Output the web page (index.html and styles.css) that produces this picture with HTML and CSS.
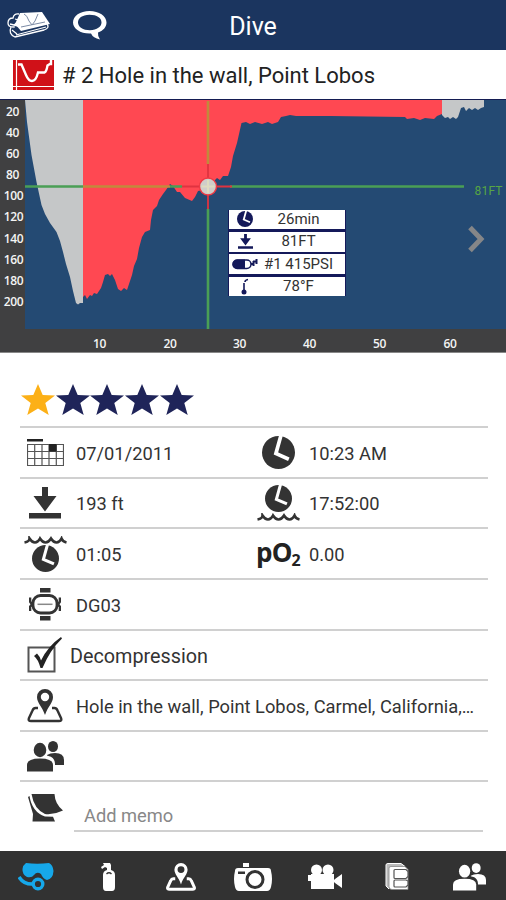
FILE: index.html
```
<!DOCTYPE html>
<html lang="en">
<head>
  <meta charset="UTF-8">
  <meta name="viewport" content="width=device-width, initial-scale=1.0">
  <title>Dive</title>
  <link rel="stylesheet" href="styles.css">
</head>
<body>

  <!-- shared icons -->
  <svg class="defs" width="0" height="0">
    <symbol id="clock" viewBox="0 0 32 32">
      <circle cx="16" cy="16" r="16" fill="currentColor"/>
      <path d="M18.500 -1L13.500 17L26 22.500" fill="none" stroke="#fff" stroke-width="3.600"/>
    </symbol>
    <symbol id="depth" viewBox="0 0 32 32">
      <path d="M13 0h6v9h8.500L16 24.500 4.500 9H13zM0 26h32v5.500H0z" fill="currentColor"/>
    </symbol>
    <symbol id="waves" viewBox="0 0 43 8">
      <path d="M.5 6.500q5-1 5-4q2.500 4 5.500 4t5-4q2.500 4 5.500 4t5.500-4q2.500 4 5.500 4t5-4q1 3 5 4" fill="none" stroke="currentColor" stroke-width="2.600"/>
    </symbol>
    <symbol id="place" viewBox="0 0 36 34">
      <path d="M11 19H8.500Q6.500 19 5.500 21.500L1.800 29.500Q1 32 4 32H32Q35 32 34.200 29.500L30.500 21.500Q29.500 19 27.500 19H25" fill="none" stroke="currentColor" class="ground"/>
      <path fill-rule="evenodd" d="M18 0a8 8 0 0 1 8 8c0 6-5 9-8 18c-3-9-8-12-8-18a8 8 0 0 1 8-8zm0 3.800a4.200 4.200 0 1 0 0 8.400a4.200 4.200 0 1 0 0-8.400z" fill="currentColor"/>
    </symbol>
    <symbol id="people" viewBox="0 0 37 31">
      <ellipse cx="26" cy="5.500" rx="5" ry="5.500" fill="currentColor"/>
      <path d="M20 14q3-2 8-2q9 0 9 7v5H20z" fill="currentColor"/>
      <path d="M0 30V23Q0 15 13 15.500Q26.500 15 26.500 23V30" class="halo" stroke-width="3"/>
      <ellipse cx="13" cy="9" rx="6.500" ry="7.500" class="halo" stroke-width="2"/>
      <path d="M0 30.500V24Q0 17.500 13 17.500Q26 17.500 26 24V30.500z" fill="currentColor"/>
      <ellipse cx="13" cy="9" rx="6.300" ry="7.200" fill="currentColor"/>
    </symbol>
    <symbol id="star" viewBox="0 0 34 31">
      <path d="M17 0L21.700 11L34 11.500L24.300 19L27.700 31L17 24.500L6.300 31L9.700 19L0 11.500L12.300 11z" fill="currentColor"/>
    </symbol>
  </svg>

  <header class="navbar">
    <div class="nav-left">
      <svg width="44" height="28" viewBox="0 0 44 28">
        <path d="M4 16q-3 7 4 10l29-7q6-2 3-6" fill="none" stroke="#fff" stroke-width="1.300"/>
        <path d="M9 24l30-8M5 19l5 4" fill="none" stroke="#fff" stroke-width="1.200"/>
        <path d="M13 2L35 1L43 13L14 20L8 13z" fill="#fff"/>
        <path d="M17 3q3 1 5 7l3 4l3-4l3-7M14 16l24-5" fill="none" stroke="#7d8ca6" stroke-width="1"/>
        <path d="M12 3q-5-1-6 4q-5 0-5 5q0 4 5 4M8 8l7 2M3 13l8 2M11 12q-5 1-4 5" fill="none" stroke="#fff" stroke-width="1.300"/>
      </svg>
      <svg width="34" height="29" viewBox="0 0 34 29">
        <path fill-rule="evenodd" d="M16.500 0C26 0 33.500 5 33.500 11.500C33.500 16 30 20 25 21.500Q24.500 25 27 28.500Q20 27 18 22.500C8 23 0 18 0 11.500C0 5 7 0 16.500 0zM16.500 3.800C9 3.800 5 7.500 5 11.500C5 16 10 19.200 17 19.200C24 19.200 28.500 15.500 28.500 11.500C28.500 7 24 3.800 16.500 3.800z" fill="#fff"/>
      </svg>
    </div>
    <h1>Dive</h1>
  </header>

  <div class="dive-title">
    <svg width="41" height="30" viewBox="0 0 41 30">
      <path d="M0 0h41v30H0z" fill="#d01118"/>
      <path d="M3.500 0v30M0 26.500h41" stroke="#fff" stroke-width="1.200"/>
      <path d="M5 4.500h3.500L13 15q2.500 6 6 6q4 0 6-8.500h6.500q2-1 3-7L37 4h1V0" fill="none" stroke="#fff" stroke-width="2.400"/>
    </svg>
    <h2># 2 Hole in the wall, Point Lobos</h2>
  </div>

  <div class="chart">
    <svg width="506" height="254" viewBox="0 99 506 254">
      <path d="M25 99H506V329H25z" fill="#244a73"/>
      <!-- descent and exit -->
      <path d="M25 100L27 122L31.500 155L36.500 182L41.500 205L45 214L50 223L56.500 232L60 241L63 252L66 264L70 277L73 291L76 303L78 304.500L80 303L83 303V100z" fill="#c5c7c8"/>
      <path d="M442 100V115L445 118L448 117L450 119L453 117L456 119L458 117L461 108L464 107L466 111L469 108L472 110L475 108L478 110L481 108L484 107V100z" fill="#c5c7c8"/>
      <!-- bottom time -->
      <path d="M83 100V297L85 295L87 299L90 295L92 296L94 293L97 294L101 288L103 282L105 275L108 274L110 276L112 274L115 280L118 289L121 291L124 288L127 290L130 281L132 275L134 266L137 259L139 248L142 237L145 232L150 230L151 220L153 210L157 206L159 200L163 194L166 190L170 184L173 186L177 192L180 192L185 198L192 201L195 197L198 191L208 189L213 182L217 178L220 180L223 176L228 176L231 167L233 156L237 143L241.500 123L246 122L250 124L255 122L262 124L268 122L272 124L278 122L281 117L286 116L290 115L296 116L330 116L405 117L407 119L414 118L420 120L425 118L434 119L437 116L442 114V100z" fill="#ff4852"/>
      <path d="M0 99.500H506" stroke="#141c52"/>
      <!-- cursor -->
      <g stroke-width="2.600">
        <path d="M25 186.500H83M170 186.500H182M230 186.500H464M208 209V329" stroke="#4a9f55"/>
        <path d="M83 186.500H170M208 101V164" stroke="#c18a3c"/>
        <path d="M182 186.500H232M208 164V209" stroke="#df3340" stroke-width="1.800"/>
      </g>
      <circle cx="208" cy="186.500" r="8.500" fill="#d0cdc9" stroke="#ee3944" stroke-width="1.400"/>
      <path d="M208 180v13M201.500 186.500h13" stroke="#dedbc0" stroke-width="2"/>
      <g class="axis">
        <text x="12.500" y="115.500">20</text>
        <text x="12.500" y="136.500">40</text>
        <text x="12.500" y="158">60</text>
        <text x="12.500" y="179">80</text>
        <text x="13.500" y="200">100</text>
        <text x="13.500" y="221">120</text>
        <text x="13.500" y="242.500">140</text>
        <text x="13.500" y="263.500">160</text>
        <text x="13.500" y="285">180</text>
        <text x="13.500" y="306">200</text>
        <text x="99.500" y="347.500">10</text>
        <text x="170" y="347.500">20</text>
        <text x="239.500" y="347.500">30</text>
        <text x="309.500" y="347.500">40</text>
        <text x="379.500" y="347.500">50</text>
        <text x="450" y="347.500">60</text>
      </g>
      <text class="depth-mark" x="474.500" y="195">81FT</text>
      <path d="M470 227.500L481 239L470 250.500" fill="none" stroke="#858688" stroke-width="5"/>
    </svg>
    <div class="tooltip">
      <div class="tip"><svg width="16" height="16"><use href="#clock"/></svg><span>26min</span></div>
      <div class="tip"><svg width="15" height="15"><use href="#depth"/></svg><span>81FT</span></div>
      <div class="tip">
        <svg width="26" height="13" viewBox="0 0 26 13">
          <rect x="1" y="2" width="18" height="8.500" rx="4.200" fill="#fff" stroke="#14195a" stroke-width="1.500"/>
          <path d="M5 1.500h8v9.500H5q-4.500-1-4.500-4.700T5 1.500z" fill="#14195a"/>
          <path d="M19 6h3M21.500 3v5M24.500 1v5M21 3.500h4" stroke="#14195a" stroke-width="2"/>
        </svg>
        <span>#1 415PSI</span>
      </div>
      <div class="tip">
        <svg width="10" height="17" viewBox="0 0 10 17">
          <path d="M4 5v9M5 4q0-2 3-2.500" fill="none" stroke="#14195a" stroke-width="1.600"/>
          <circle cx="4" cy="14" r="2.500" fill="#14195a"/>
        </svg>
        <span>78°F</span>
      </div>
    </div>
  </div>

  <main class="details">
    <div class="row rating">
      <svg class="on"><use href="#star"/></svg>
      <svg><use href="#star"/></svg>
      <svg><use href="#star"/></svg>
      <svg><use href="#star"/></svg>
      <svg><use href="#star"/></svg>
    </div>

    <div class="row">
      <div class="icon">
        <svg width="37" height="27" viewBox="0 0 37 27">
          <path d="M.5 5.500h36v21H.5zM.5 12.500h36M.5 19.500h36M7.700 5.500v21M15 5.500v21M22 5.500v21M29.300 5.500v21" fill="none" stroke="#555" stroke-width="1.200"/>
          <path d="M0 0h16v2.500H0zM22 5h7.500v7.500H22z" fill="#222"/>
        </svg>
      </div>
      <span class="value">07/01/2011</span>
      <div class="icon"><svg width="33" height="33"><use href="#clock"/></svg></div>
      <span class="value">10:23 AM</span>
    </div>

    <div class="row">
      <div class="icon"><svg width="32" height="32"><use href="#depth"/></svg></div>
      <span class="value">193 ft</span>
      <div class="icon stack">
        <svg width="27" height="27"><use href="#clock"/></svg>
        <svg width="43" height="8"><use href="#waves"/></svg>
      </div>
      <span class="value">17:52:00</span>
    </div>

    <div class="row">
      <div class="icon stack">
        <svg width="43" height="8"><use href="#waves"/></svg>
        <svg width="27" height="27"><use href="#clock"/></svg>
      </div>
      <span class="value">01:05</span>
      <div class="icon po2">pO<small>2</small></div>
      <span class="value">0.00</span>
    </div>

    <div class="row">
      <div class="icon">
        <svg width="32" height="33" viewBox="0 0 32 33">
          <path d="M11 0h10.500v4.500H11zM11 28h10.500v4.500H11z" fill="currentColor"/>
          <rect x="4" y="7.500" width="24" height="17.500" rx="7.500" fill="none" stroke="currentColor" stroke-width="2.800"/>
          <path d="M1 9.500v4l2 2.800L1 19v4M31 9.500v4l-2 2.800l2 2.700v4" fill="none" stroke="currentColor" stroke-width="2.600"/>
          <path d="M8.500 16.300h15" stroke="#888" stroke-width="1.500"/>
        </svg>
      </div>
      <span class="value">DG03</span>
    </div>

    <div class="row">
      <div class="icon">
        <svg width="36" height="36" viewBox="0 0 36 36">
          <rect x="1.500" y="10.500" width="26" height="24" fill="none" stroke="#555" stroke-width="2"/>
          <path d="M7 19l3-2.500q3 3 4 7Q21 9 34 0l1 1.500Q23 13 15.500 31h-2Q11 22 7 19z" fill="#222"/>
        </svg>
      </div>
      <span class="value deco">Decompression</span>
    </div>

    <div class="row">
      <div class="icon"><svg width="36" height="34"><use href="#place"/></svg></div>
      <span class="value location">Hole in the wall, Point Lobos, Carmel, California,…</span>
    </div>

    <div class="row">
      <div class="icon"><svg width="37" height="31"><use href="#people"/></svg></div>
    </div>

    <div class="row memo">
      <div class="icon">
        <svg width="35" height="28" viewBox="0 0 35 28">
          <path d="M3.500 0H26.500Q27 10 35 16.500Q26 21 17 20Q6 15 3.500 0z" fill="currentColor"/>
          <path d="M0 3l1.500-1Q4 18 17 22.500L25 22.700L27 27.500H4.500L5 20z" fill="currentColor"/>
        </svg>
      </div>
      <input type="text" placeholder="Add memo">
    </div>
  </main>

  <nav class="tabs">
    <a class="active">
      <svg width="36" height="28" viewBox="0 0 36 28">
        <path d="M8 0Q19 1.500 31 0Q35 2 35.500 8Q35 16 29 17Q25 16 23 11Q19 8 16 12Q14 15 9 14Q4 11 4.500 6Q5 2 8 0z" fill="currentColor"/>
        <path d="M1 14Q6 22 16 21" fill="none" stroke="currentColor" stroke-width="3.500"/>
        <circle cx="20" cy="21" r="4.800" fill="none" stroke="currentColor" stroke-width="3.400"/>
      </svg>
    </a>
    <a>
      <svg width="16" height="28" viewBox="0 0 16 28">
        <path d="M3 12q0-4 4-5V5L5 4L2 6L1 4l3-2L3 0h7l1 2v5q4 1 4 5v12q0 4-3 4H6q-3 0-3-4z" fill="#fff"/>
        <path d="M6.500 11q2.500-2.500 5 0" fill="none" stroke="#333" stroke-width="1.400"/>
      </svg>
    </a>
    <a><svg width="30" height="28"><use href="#place"/></svg></a>
    <a>
      <svg width="38" height="28" viewBox="0 0 38 28">
        <path d="M9 0h6v4H9zM4 5h30q3 0 3 3q2 8 0 16q-1 4-4 4H5q-3 0-4-4q-2-8 0-16q0-3 3-3z" fill="#fff"/>
        <circle cx="21" cy="16.500" r="8" fill="none" stroke="#333" stroke-width="3"/>
        <path d="M4 8.500h7v2.500H4z" fill="#333"/>
      </svg>
    </a>
    <a>
      <svg width="34" height="25" viewBox="0 0 34 25">
        <path d="M3 10h23v15H3zM0 11h4v6H0zM27 15l7-5v14l-7-5z" fill="#fff"/>
        <circle cx="8.500" cy="6" r="5.500" fill="#fff"/><circle cx="20" cy="6" r="5.500" fill="#fff"/>
        <path d="M26 17h2" stroke="#fff" stroke-width="3"/>
      </svg>
    </a>
    <a>
      <svg width="25" height="28" viewBox="0 0 25 28">
        <path d="M4 26L1 23V2Q1 .5 3 .5h13l4 3" fill="#bbb" stroke="#fff"/>
        <path d="M6 3.500h14l3 3v20H7q-3 0-3-3V5q0-1.500 2-1.500z" fill="#fff" stroke="#888" stroke-width=".8"/>
        <path d="M10 6.500h11l2 2v5l-2 2H10q-1 0-1-1v-7q0-1 1-1zM10 17h11l2 1v4l-2 2H10q-1 0-1-1v-5q0-1 1-1z" fill="#fff" stroke="#555" stroke-width="1.200"/>
      </svg>
    </a>
    <a><svg width="33" height="28"><use href="#people"/></svg></a>
  </nav>

</body>
</html>
```
FILE: styles.css
```
* {
  box-sizing: border-box;
}
body {
  --icon-bg: #fff;
  --ground-width: 2.4px;
  margin: 0;
  width: 506px;
  height: 900px;
  display: flex;
  flex-direction: column;
  background: #fff;
  color: #333;
  font-family: Roboto, sans-serif;
  overflow: hidden;
}
svg {
  display: block;
  flex: none;
}
.defs {
  position: absolute;
}
.navbar {
  height: 50px;
  flex: none;
  display: grid;
  grid-template-columns: 1fr auto 1fr;
  background: #1b355f;
  color: #fff;
}
.nav-left {
  display: flex;
  gap: 22px;
  padding: 11px 0 0 7px;
}
.navbar h1 {
  margin: 0;
  font-size: 25px;
  font-weight: 400;
  line-height: 53px;
}
.dive-title {
  height: 49px;
  flex: none;
  display: flex;
  align-items: center;
  padding-left: 13px;
}
.dive-title h2 {
  margin: 2px 0 0 8px;
  color: #222;
  font-size: 22px;
  font-weight: 400;
  white-space: nowrap;
}
.chart {
  position: relative;
  height: 254px;
  flex: none;
  background: #404041;
  border-bottom: 1px solid #888;
}
.axis text {
  fill: #f4f4f4;
  font-family: "Open Sans", "Noto Sans", sans-serif;
  font-size: 12px;
  font-weight: 600;
  letter-spacing: -0.3px;
  text-anchor: middle;
}
.depth-mark {
  fill: #57a544;
  font-size: 12px;
  letter-spacing: 0.2px;
}
.tooltip {
  position: absolute;
  left: 228px;
  top: 110.5px;
  width: 118px;
  display: grid;
  gap: 2.6px;
  padding: 0 1px;
  background: #14195a;
}
.tip {
  height: 19.8px;
  display: grid;
  grid-template-columns: 32px 1fr;
  align-items: center;
  background: #fff;
  color: #14195a;
}
.tip svg {
  justify-self: center;
}
.tip span {
  padding-right: 9px;
  text-align: center;
  color: #333;
  font-size: 15px;
  line-height: 19px;
}
.details {
  flex: 1;
  padding: 23px 18px 0 20px;
}
.row {
  height: 50.65px;
  display: grid;
  grid-template-columns: 50px 183px 50px 1fr;
  align-items: center;
  border-bottom: 2px solid #d0d0d0;
}
.icon {
  display: flex;
  justify-content: center;
}
.stack {
  flex-direction: column;
  align-items: center;
  gap: 1px;
}
.value {
  padding-left: 6px;
  padding-top: 2px;
  font-size: 18.3px;
  white-space: nowrap;
}
.deco {
  padding-left: 0;
  padding-top: 3px;
  font-size: 19.8px;
}
.location {
  grid-column: 2 / 5;
}
.rating {
  display: flex;
  gap: 0.7px;
  height: 52px;
  padding: 0 0 4px 1px;
  color: #1f2459;
}
.rating svg {
  width: 34px;
  height: 31px;
}
.rating .on {
  color: #fcb017;
}
.po2 {
  align-items: baseline;
  color: #222;
  font-family: "Open Sans", "Noto Sans", sans-serif;
  font-size: 26px;
  font-weight: 700;
  line-height: 36px;
  letter-spacing: -0.8px;
}
.po2 small {
  position: relative;
  top: 4px;
  font-size: 16px;
}
.ground {
  stroke-width: var(--ground-width);
}
.halo {
  fill: var(--icon-bg);
  stroke: var(--icon-bg);
}
.memo {
  border-bottom: 0;
}
.memo input {
  grid-column: 2 / 5;
  margin: 14px 5px 0 4px;
  height: 35px;
  padding: 4px 10px 0;
  border: 0;
  border-bottom: 2px solid #d0d0d0;
  outline: 0;
  font: 18.3px Roboto, sans-serif;
}
.memo input::placeholder {
  color: #888;
}
.tabs {
  --icon-bg: #323232;
  --ground-width: 3.6px;
  height: 49px;
  flex: none;
  display: grid;
  grid-template-columns: repeat(7, 1fr);
  place-items: center;
  padding-top: 2px;
  background: #323232;
  color: #fff;
}
.tabs .active {
  color: #16a8ea;
}
```
